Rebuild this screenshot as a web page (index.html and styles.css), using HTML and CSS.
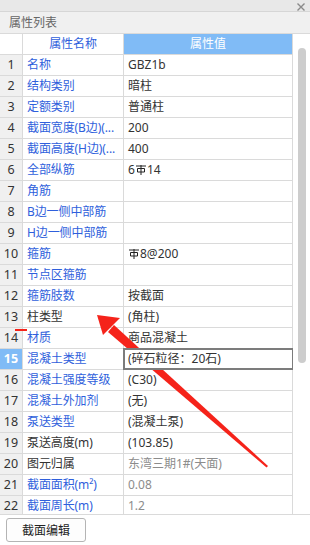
FILE: index.html
```html
<!DOCTYPE html>
<html lang="zh">
<head>
<meta charset="utf-8">
<title>属性列表</title>
<link rel="stylesheet" href="styles.css">
</head>
<body>
<div class="panel">
  <div class="topbar">
    <svg class="close" width="8" height="8" viewBox="0 0 8 8"><path d="M0.5 0.5L7.5 7.5M7.5 0.5L0.5 7.5" stroke="#8a8a8a" stroke-width="1.4"/></svg>
  </div>
  <div class="title">属性列表</div>
  <div class="grid-wrap">
    <div class="table">
      <div class="row head">
        <div class="c num"></div>
        <div class="c name hname">属性名称</div>
        <div class="c hval">属性值</div>
      </div>
      <div class="body">
        <div class="row"><div class="c num">1</div><div class="c name">名称</div><div class="c val">GBZ1b</div></div>
        <div class="row"><div class="c num">2</div><div class="c name">结构类别</div><div class="c val">暗柱</div></div>
        <div class="row"><div class="c num">3</div><div class="c name">定额类别</div><div class="c val">普通柱</div></div>
        <div class="row"><div class="c num">4</div><div class="c name">截面宽度(B边)(...</div><div class="c val">200</div></div>
        <div class="row"><div class="c num">5</div><div class="c name">截面高度(H边)(...</div><div class="c val">400</div></div>
        <div class="row"><div class="c num">6</div><div class="c name">全部纵筋</div><div class="c val">6<svg class="rebar" width="10" height="10" viewBox="0 0 10 10"><path d="M0 1H10M5 0V10M1.5 3.5H8.5V7H1.5Z" fill="none" stroke="#222" stroke-width="1"/></svg>14</div></div>
        <div class="row"><div class="c num">7</div><div class="c name">角筋</div><div class="c val"></div></div>
        <div class="row"><div class="c num">8</div><div class="c name">B边一侧中部筋</div><div class="c val"></div></div>
        <div class="row"><div class="c num">9</div><div class="c name">H边一侧中部筋</div><div class="c val"></div></div>
        <div class="row"><div class="c num">10</div><div class="c name">箍筋</div><div class="c val"><svg class="rebar" width="10" height="10" viewBox="0 0 10 10"><path d="M0 1H10M5 0V10M1.5 3.5H8.5V7H1.5Z" fill="none" stroke="#222" stroke-width="1"/></svg>8@200</div></div>
        <div class="row"><div class="c num">11</div><div class="c name">节点区箍筋</div><div class="c val"></div></div>
        <div class="row"><div class="c num">12</div><div class="c name">箍筋肢数</div><div class="c val">按截面</div></div>
        <div class="row"><div class="c num">13</div><div class="c name dark">柱类型</div><div class="c val">(角柱)</div></div>
        <div class="row"><div class="c num">14</div><div class="c name">材质</div><div class="c val">商品混凝土</div></div>
        <div class="row"><div class="c num sel">15</div><div class="c name">混凝土类型</div><div class="c val edit">(碎石粒径：20石)</div></div>
        <div class="row"><div class="c num">16</div><div class="c name">混凝土强度等级</div><div class="c val">(C30)</div></div>
        <div class="row"><div class="c num">17</div><div class="c name">混凝土外加剂</div><div class="c val">(无)</div></div>
        <div class="row"><div class="c num">18</div><div class="c name">泵送类型</div><div class="c val">(混凝土泵)</div></div>
        <div class="row"><div class="c num">19</div><div class="c name dark">泵送高度(m)</div><div class="c val">(103.85)</div></div>
        <div class="row"><div class="c num">20</div><div class="c name dark">图元归属</div><div class="c val muted">东湾三期1#(天面)</div></div>
        <div class="row"><div class="c num">21</div><div class="c name">截面面积(m²)</div><div class="c val muted">0.08</div></div>
        <div class="row"><div class="c num">22</div><div class="c name">截面周长(m)</div><div class="c val muted">1.2</div></div>
      </div>
    </div>
    <div class="scroll"><div class="thumb"></div></div>
  </div>
  <div class="footer"><button class="btn">截面编辑</button></div>

  <span class="mark"></span>
  <svg class="arrow" width="310" height="545" viewBox="0 0 310 545">
    <polygon points="97,315 120,318 103,335" fill="#f5231a"/>
    <polygon points="108,332 114,325 268,466 266.5,467.5" fill="#f5231a"/>
  </svg>
</div>
</body>
</html>
```

FILE: styles.css
```css
* { box-sizing: border-box; }
html, body { margin: 0; padding: 0; }
body {
  width: 310px;
  height: 545px;
  overflow: hidden;
  background: #ffffff;
  font-family: "Noto Sans", "Noto Sans CJK SC", sans-serif;
  font-size: 12px;
  color: #333;
}
.panel {
  position: relative;
  width: 310px;
  height: 545px;
  display: flex;
  flex-direction: column;
}
.topbar {
  height: 12px;
  background: #e8e8e8;
  border-bottom: 1px solid #d6d6d6;
  display: flex;
  justify-content: flex-end;
  align-items: center;
  padding-right: 5px;
}
.close { display: block; margin-top: 2px; }
.title {
  height: 21px;
  background: #f0f0f0;
  color: #666;
  line-height: 21px;
  padding-left: 9px;
}
.grid-wrap {
  display: flex;
  height: 482px;
  border-top: 1px solid #dadada;
  border-bottom: 1px solid #dadada;
}
.table { width: 293px; display: flex; flex-direction: column; }
.row {
  display: grid;
  grid-template-columns: 23px 101px 169px;
  height: 21px;
  flex: none;
}
.head { height: 21px; }
.c {
  border-right: 1px solid #dadada;
  border-bottom: 1px solid #dadada;
  line-height: 20px;
  white-space: nowrap;
  overflow: hidden;
  padding-left: 4px;
}
.num {
  background: #f0f0f0;
  text-align: center;
  padding-left: 0;
  color: #333;
  font-size: 12.5px;
}
.head .num { background: #ffffff; }
.hname { text-align: center; padding-left: 0; color: #333; }
.hval {
  text-align: center;
  padding-left: 0;
  background: #80bbf6;
  color: #ffffff;
}
.body {
  height: 459px;
  overflow: hidden;
}
.name { color: #2f5fdc; letter-spacing: -0.1px; }
.name.dark { color: #333; }
.val { color: #333; display: flex; align-items: center; }
.val.muted { color: #8c8c8c; }
.num.sel { background: #80bbf6; color: #ffffff; font-weight: bold; }
.val.edit {
  border: 2px solid #7c7c7c;
  margin-left: -1px;
  margin-top: -1px;
  height: 22px;
  padding-left: 3px;
  width: 171px;
  position: relative;
  z-index: 1;
  background: #fff;
}
.rebar { display: block; margin: 0 1px; }
.scroll {
  width: 17px;
  padding: 14px 4px 0 5px;
}
.thumb {
  width: 8px;
  height: 315px;
  background: #cdcdcd;
  border-radius: 4px;
}
.footer {
  flex: 1;
  padding: 3px 0 0 6px;
}
.btn {
  width: 80px;
  height: 24px;
  border: 1px solid #b4b4b4;
  border-radius: 3px;
  background: #fdfdfd;
  font-family: "Noto Sans", "Noto Sans CJK SC", sans-serif;
  font-size: 12px;
  color: #222;
  padding: 0;
}
.mark {
  position: absolute;
  left: 15px;
  top: 329px;
  width: 12px;
  height: 2px;
  background: #f5231a;
}
.arrow {
  position: absolute;
  left: 0;
  top: 0;
  pointer-events: none;
}
```
